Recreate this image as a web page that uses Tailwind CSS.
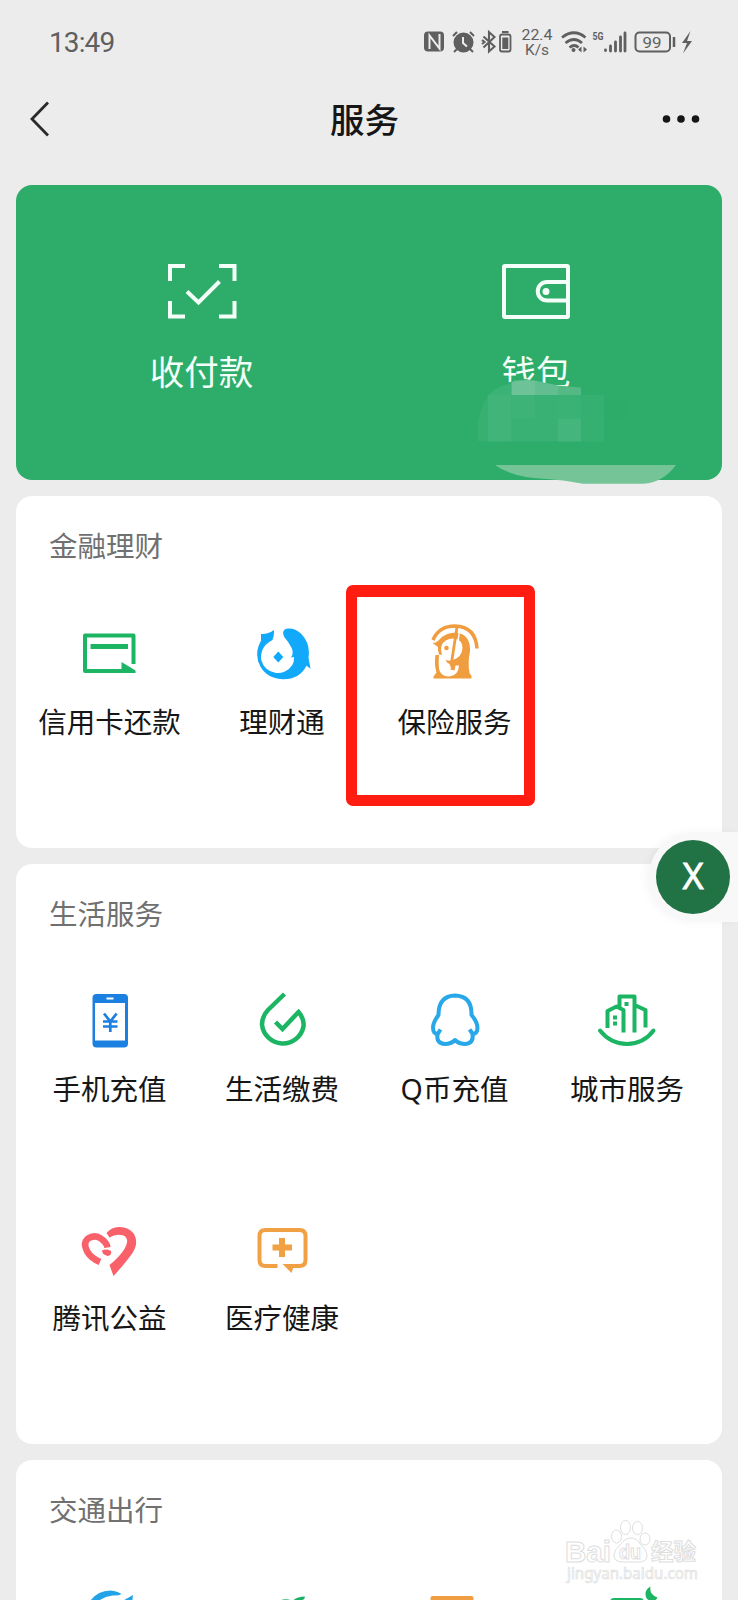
<!DOCTYPE html>
<html lang="zh-CN">
<head>
<meta charset="utf-8">
<title>服务</title>
<script src="https://cdn.jsdelivr.net/npm/@tailwindcss/browser@4"></script>
</head>
<body class="bg-[#ececec]">
<div class="relative flex h-[1600px] w-[738px] flex-col overflow-hidden bg-[#ececec] font-['Roboto','Noto_Sans_CJK_SC',sans-serif] text-[28.5px] text-[#161616]">

  <!-- Status bar -->
  <div class="flex h-[84px] shrink-0 items-center justify-between pr-[38px] pl-[49px] text-[#5f5f5f]">
    <span class="pt-[2px] text-[28px] leading-[84px] tracking-[-0.9px]">13:49</span>
    <svg class="h-[60px] w-[280px]" viewBox="420 12 280 60" fill="none" stroke="currentColor">
      <rect x="424" y="31.500" width="20" height="20" rx="4" fill="currentColor" stroke="none"/>
      <path d="M429.500 49V35.500l10 13V34" stroke="#ececec" stroke-width="2"/>
      <g stroke-width="2"><circle cx="463.500" cy="42.500" r="9" fill="currentColor"/><path d="M453 36l4-4M470 32l4 4M457 49l-3 3M470 49l3 3"/><path d="M463 37v6l4 3.500" stroke="#ececec"/></g>
      <path d="M483.500 36.500l11 10-5.500 5V32l5.500 5-11 10.500M482 40l2.500 2-2.500 2" stroke-width="2.100"/>
      <rect x="500" y="34.500" width="10.500" height="17" rx="2" stroke-width="1.800"/><path d="M502 32h6.500" stroke-width="2"/><rect x="502.300" y="37.500" width="6" height="11.500" fill="currentColor" stroke="none"/>
      <g fill="currentColor" stroke="none" font-family="Roboto, sans-serif"><text x="521.500" y="40.300" font-size="15.500" textLength="31" lengthAdjust="spacingAndGlyphs">22.4</text><text x="525" y="54.800" font-size="15.500" textLength="24" lengthAdjust="spacingAndGlyphs">K/s</text></g>
      <path d="M562 37.500q12-9.500 23.500 0M565.500 43q8.500-7 16.500 0M569.500 47.500q5-4 9 0" stroke-width="2.700"/>
      <circle cx="573.500" cy="50" r="2" fill="currentColor" stroke="none"/><path d="M578 49.500l3.500-3v6zM587 49.500l-3.500-3v6z" fill="currentColor" stroke="none"/>
      <text x="592.500" y="40" font-family="Roboto, sans-serif" font-size="11" font-weight="700" fill="currentColor" stroke="none" textLength="11" lengthAdjust="spacingAndGlyphs">5G</text>
      <path d="M605.500 50v.5M610.500 46v5M615.500 42v9M620.500 37v14M625 33v18" stroke-width="2.800" stroke-linecap="round"/>
      <rect x="635.500" y="32.500" width="34.500" height="19" rx="4" stroke-width="2"/><path d="M674 37v10" stroke-width="2.500"/>
      <text x="642.500" y="47.500" font-family="Roboto, sans-serif" font-size="15.500" fill="currentColor" stroke="none" textLength="19" lengthAdjust="spacingAndGlyphs">99</text>
      <path d="M690.500 31l-8.500 12h5l-4 10.500 9-12.500h-5z" fill="currentColor" stroke="none"/>
    </svg>
  </div>

  <!-- Title bar -->
  <header class="flex h-[101px] shrink-0 items-start">
    <svg class="h-[70px] w-[80px]" viewBox="0 84 80 70" fill="none" stroke="#2a2a2a" stroke-width="2.800"><path d="M48 102.500L32 119l16 16.500"/></svg>
    <h1 class="w-[569px] pt-[2px] text-center text-[34.500px] leading-[70px] font-medium">服务</h1>
    <svg class="h-[70px] w-[89px]" viewBox="649 84 89 70" fill="#161616"><circle cx="666.500" cy="119" r="3.800"/><circle cx="681" cy="119" r="3.800"/><circle cx="695.500" cy="119" r="3.800"/></svg>
  </header>

  <main class="flex flex-col gap-4 px-4">
    <!-- Payment card -->
    <section class="relative grid h-[295px] shrink-0 grid-cols-[371px_298px] rounded-2xl bg-[#2dad69] pt-[66px] text-[34.500px] text-[#f3fff8]">
      <div class="flex flex-col items-center">
        <svg class="h-20 w-20" viewBox="162 251 80 80" fill="none" stroke="#f3fff8" stroke-width="4"><path d="M185 266h-15v15M219 266h15.500v15M185 316.500h-15V301M219 316.500h15.500V301M187 291.500l11.500 11 21-21"/></svg>
        <span class="mt-[17px] leading-[50px]">收付款</span>
      </div>
      <div class="flex flex-col items-center">
        <svg class="h-20 w-20" viewBox="496 251 80 80" fill="none" stroke="#f3fff8" stroke-width="4"><rect x="504" y="266" width="64" height="51" rx="1"/><path d="M568 282h-21a9 9 0 000 18.500h21"/><circle cx="546" cy="291.500" r="3.500" fill="#f3fff8" stroke="none"/></svg>
        <span class="mt-[17px] leading-[50px]">钱包</span>
      </div>
      <!-- Blurred balance -->
      <svg class="absolute top-[190px] left-[454px] h-[120px] w-[220px]" viewBox="470 375 220 120">
        <path d="M485 398q14-17 41-19l20 6 20 2h3v20h-84z" fill="#2dad69"/>
        <path d="M478 441q-3-26 10-46h93v46z" fill="#37b071"/>
        <path d="M488 395q10-9 23.500-12v12z" fill="#3cb376"/>
        <path d="M511.500 382q10-3 23.500-1.500V395h-23.500z" fill="#6dc298"/>
        <path d="M535 380.500l23 5V395h-23z" fill="#62be90"/>
        <path d="M558 385.500l23 2V395h-23z" fill="#54b985"/>
        <path d="M488 395h23.500v46.500H488z" fill="#41b479"/><path d="M511.500 395H535v23.500h-23.500z" fill="#3eb377"/><path d="M535 395h23v23.500h-23z" fill="#3ab174"/><path d="M511.500 418.500H558v23h-46.500z" fill="#39b174"/><path d="M558 395h23v23.500h-23z" fill="#3bb275"/><path d="M558 418.500h23v23h-23z" fill="#44b57c"/><path d="M581 395h23v46.500h-23z" fill="#36b071"/><path d="M604 399h25v21h-25z" fill="#2dac69"/>
        <path d="M495 465q18 13 52 14 18 1 36 4.700h60q20-1 33-18.700z" fill="#74c497"/>
      </svg>
    </section>

    <!-- Finance -->
    <section class="h-[352px] shrink-0 rounded-2xl bg-white pt-8 pl-[7px]">
      <h2 class="pl-[26px] leading-10 text-[#707070]">金融理财</h2>
      <div class="grid auto-rows-[229px] grid-cols-[173px_172px_173px_172px]">
        <div class="flex flex-col items-center pt-11">
          <svg class="h-20 w-20" viewBox="70.500 612 80 80" fill="none" stroke="#1cb563" stroke-width="4"><path d="M134 664v-28.500H85.500V671H124" stroke-linejoin="round"/><path d="M91 646.500h37.500" stroke-width="5"/><path d="M122 662l14 8.500v2.500h-14z" fill="#1cb563" stroke="none"/></svg>
          <span class="mt-3 leading-10 whitespace-nowrap">信用卡还款</span>
        </div>
        <div class="flex flex-col items-center pt-11">
          <svg class="h-20 w-20" viewBox="242 612 80 80" fill="#12a9fb"><path d="M261 634q7 .5 13-4 .3 6-1.500 10-8 4-10.500 11-1.500 6-.7 9a17 17 0 0031 5q2-3 1.700-8l-3 .5q3-4 .7-9.500-3-6-7.500-11-3-6 2-8.300 8-1.500 15 5 9.500 10 7.300 24l2 11-4-3q-7 13.500-23 13.500-16-.5-23-12.500-7-13 .5-26z"/><path d="M278.300 651.500l5 5.500-5 5.500-5-5.500z"/></svg>
          <span class="mt-3 leading-10">理财通</span>
        </div>
        <div class="flex flex-col items-center pt-11">
          <svg class="h-20 w-20" viewBox="415.500 612 80 80" fill="none" stroke="#ef9d3f"><path d="M433.500 640q6-14 22-14 20.500.5 22 22.500" stroke-width="3.500"/><path fill-rule="evenodd" d="M433 643q3.500 0 6-2.500 6-8 18.500-8 14 3 13 19-2.500 11-.5 21.500l2 3v2.500h-38v-2l3-4q-2.500-8-1-17.500h3.500q-1 13 1 17 3 4.500 9.500 4.500 9-1 9.500-11h-3.500l-1 5-4-1 .5-5q-4-1-5.500-4.500 5 1.500 7.500 0 9-3 9.500-12 0-9-9-9.500-9.500 0-12 7.500-1 3 .5 9l-3-.5q-1.500-5-1-7.500z" fill="#ef9d3f" stroke="none"/><path d="M457.500 627l-6 39" stroke-width="2.800"/><path d="M460 631l-3.500 24" stroke="#fff" stroke-width="1.500"/><circle cx="447" cy="648" r="2.300" fill="#ef9d3f" stroke="none"/></svg>
          <span class="mt-3 leading-10">保险服务</span>
        </div>
      </div>
    </section>

    <!-- Daily life -->
    <section class="h-[580px] shrink-0 rounded-2xl bg-white pt-8 pl-[7px]">
      <h2 class="pl-[26px] leading-10 text-[#707070]">生活服务</h2>
      <div class="grid auto-rows-[229px] grid-cols-[173px_172px_173px_172px]">
        <div class="flex flex-col items-center pt-11">
          <svg class="h-20 w-20" viewBox="70.500 980 80 80" fill="none" stroke="#1c80e0" stroke-width="2.700"><rect x="93" y="994" width="35.500" height="53.500" rx="4" fill="#1c80e0" stroke="none"/><path d="M95.500 1003h30v37.500h-30z" fill="#fff" stroke="none"/><path d="M107 998.500h7" stroke="#fff" stroke-width="2"/><path d="M104.500 1013.500l6.300 8 6.300-8M103.500 1021.500h14.500M103.500 1026.500h14.500M110.800 1021v11"/></svg>
          <span class="mt-[11px] leading-10">手机充值</span>
        </div>
        <div class="flex flex-col items-center pt-11">
          <svg class="h-20 w-20" viewBox="242 980 80 80" fill="none" stroke="#1cb563" stroke-width="4.500"><path d="M275.500 1022l7 7 16-17q6 7 5 14.500a21 21 0 01-41.500-2q0-8 6-14.500l16.500-16" /></svg>
          <span class="mt-[11px] leading-10">生活缴费</span>
        </div>
        <div class="flex flex-col items-center pt-11">
          <svg class="h-20 w-20" viewBox="415.500 980 80 80" fill="none" stroke="#28a7e9" stroke-width="4" stroke-linejoin="round"><path d="M441 1029.500l-2.500 4q-5 1-5-6 0-5 5.500-12.500 0-19 16.500-19.500 17 .5 16.500 19.500 6 7 6 13-.5 6.500-5 5.500l-3-4"/><path d="M438 1034q-1.500 9.500 7.500 10 6 0 10-4 4 4 10.500 4 8.500-1 7-10"/></svg>
          <span class="mt-[11px] leading-10 whitespace-nowrap"><span class="font-['Noto_Sans'] leading-none">Q</span>币充值</span>
        </div>
        <div class="flex flex-col items-center pt-11">
          <svg class="h-20 w-20" viewBox="588 980 80 80" fill="none" stroke="#1cb563" stroke-width="4" stroke-linejoin="round"><path d="M608.500 1028v-17l9-4.500 7 3.500v22.500M620.500 1007v-10.500h15v36M635.500 1005l11 5v17.500"/><path d="M601 1030.500q10 13 27 13.500 17-.5 26.500-13.500" stroke-linecap="round"/><path d="M616 1015.500v4M616 1021.500v4M627.500 1002v4"/></svg>
          <span class="mt-[11px] leading-10">城市服务</span>
        </div>
        <div class="flex flex-col items-center pt-11">
          <svg class="h-20 w-20" viewBox="70.500 1209 80 80" fill="none" stroke="#f9616a"><path d="M100.500 1262q-9-4-12.500-10-5-9 .5-13.500 6-4 12-.5 6.500 4 7.500 9.500" stroke-width="6.500"/><path d="M107 1233q5-6 12-6 10-.5 15.500 7 5 9-1.500 19-7 10-19 23l-4-11q11-9 15.500-17 5-9-1.500-12.500-8-2-14 2z" fill="#f9616a" stroke="none"/><path d="M102.500 1250.500q4-2 9 .5 1 4.500-3.500 5-5.500-1.500-5.500-5.500z" fill="#f9616a" stroke="none"/></svg>
          <span class="mt-[11px] leading-10">腾讯公益</span>
        </div>
        <div class="flex flex-col items-center pt-11">
          <svg class="h-20 w-20" viewBox="242.500 1209 80 80" fill="none" stroke="#f1a144" stroke-width="4"><path d="M278 1266h-12q-6 0-6-6v-24q0-6 6-6h34q6 0 6 6v24q0 6-6 6h-8"/><path d="M282.500 1238v19M273 1247.500h19.500" stroke-width="6"/><path d="M283 1264h12l-3 9z" fill="#f1a144" stroke="none"/></svg>
          <span class="mt-[11px] leading-10">医疗健康</span>
        </div>
      </div>
    </section>

    <!-- Travel -->
    <section class="h-[351px] shrink-0 rounded-2xl bg-white pt-8 pl-[7px]">
      <h2 class="pl-[26px] leading-10 text-[#707070]">交通出行</h2>
      <div class="grid auto-rows-[229px] grid-cols-[173px_172px_173px_172px] justify-items-center pt-11">
        <svg class="h-20 w-20" viewBox="69.500 1576 80 80" fill="#22a3e8"><path d="M89 1602q7-11 21-11.500 7 .5 11 3.500-3 2-9 1.500-9 1-16 7zM122 1601l10.500-6-1 8z"/></svg>
        <svg class="h-20 w-20" viewBox="242 1576 80 80" fill="#1caf62"><path d="M281 1600q6-2 12 1h6q6-1 6-4.500-8 0-12 4z"/></svg>
        <svg class="h-20 w-20" viewBox="414.500 1576 80 80" fill="#f19e43"><rect x="430" y="1596" width="43" height="40" rx="2"/></svg>
        <svg class="h-20 w-20" viewBox="587 1576 80 80" fill="#1cb563"><rect x="610" y="1598" width="34" height="30" rx="4"/><path d="M650.500 1586.500q-1.500 8 7 11-1.500 3.500-6 3.500-6-1-6-7 0-5 5-7.500z"/></svg>
      </div>
    </section>
  </main>

  <!-- Highlight frame -->
  <div class="absolute top-[585px] left-[346px] h-[221px] w-[189px] rounded-[7px] bg-[#fe1d10] [clip-path:polygon(evenodd,0_0,189px_0,189px_221px,0_221px,0_0,11px_12px,178px_12px,178px_210px,11px_210px,11px_12px)]"></div>

  <!-- Floating shortcut -->
  <div class="absolute top-[832px] left-[649px] flex h-[90px] w-[89px] items-center rounded-l-full bg-[#f8f8f8] pl-[7px] shadow-[-3px_0_10px_rgba(0,0,0,0.04)]">
    <div class="flex h-[74px] w-[74px] items-center justify-center rounded-full bg-[#217346] pb-[2px] font-['Noto_Sans'] text-[36px] text-white [-webkit-text-stroke:0.8px_white]">X</div>
  </div>

  <!-- Watermark -->
  <svg class="absolute top-[1515px] left-[560px] h-[72px] w-[145px]" viewBox="560 1515 145 72" fill="#fff" stroke="#dedede" stroke-width="1">
    <text x="565" y="1561.500" font-family="Liberation Sans, sans-serif" font-weight="700" font-size="29" textLength="46" lengthAdjust="spacingAndGlyphs">Bai</text>
    <ellipse cx="616.500" cy="1536.500" rx="5" ry="6.500"/><ellipse cx="625.500" cy="1527.500" rx="5" ry="7"/><ellipse cx="637.500" cy="1528" rx="5" ry="6.500"/><ellipse cx="645" cy="1539" rx="5" ry="6"/>
    <path d="M631 1538q6 0 10 7 6 5 6 10 0 7-8 7h-16q-9 0-9-7 0-5 6-10 5-7 11-7z"/>
    <text x="619" y="1559" font-family="Liberation Sans, sans-serif" font-weight="700" font-size="20" textLength="22" lengthAdjust="spacingAndGlyphs">du</text>
    <text x="651" y="1560" font-family="Noto Sans CJK SC, sans-serif" font-weight="700" font-size="22.500">经验</text>
    <text x="567" y="1579" font-family="Noto Sans, sans-serif" font-size="15.500" stroke-width=".7" textLength="131" lengthAdjust="spacingAndGlyphs">jingyan.baidu.com</text>
  </svg>
</div>
</body>
</html>
